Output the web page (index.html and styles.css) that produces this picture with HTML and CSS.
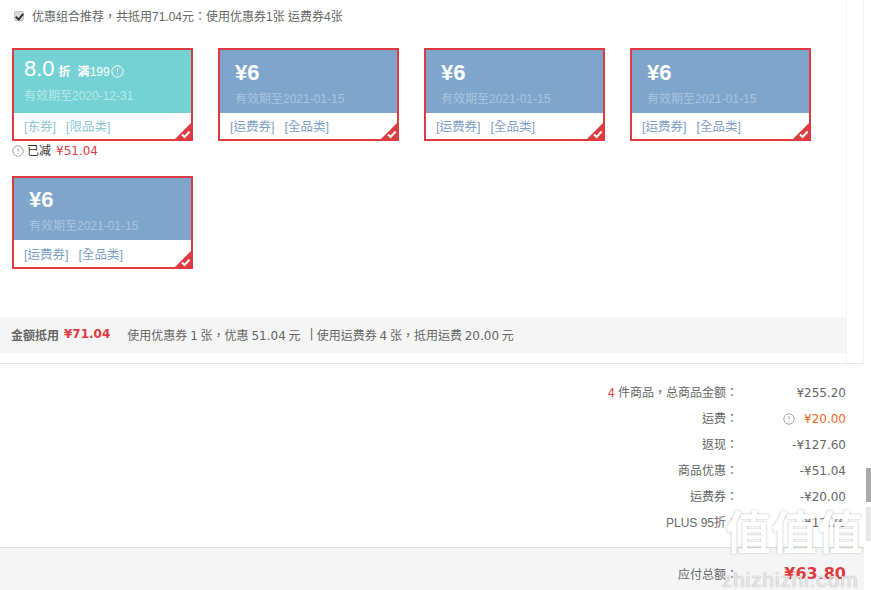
FILE: index.html
```html
<!DOCTYPE html>
<html lang="zh-Hant">
<head>
<meta charset="utf-8">
<title>优惠券</title>
<link rel="stylesheet" href="styles.css">
</head>
<body>
<div class="page">
  <section class="panel">
    <div class="inner">
      <label class="combo"><input type="checkbox" checked class="check"><span>优惠组合推荐，共抵用71.04元：使用优惠券1张 运费券4张</span></label>
      <div class="coupons">
        <div class="cell">
          <div class="coupon">
            <div class="face teal">
              <div class="discount"><span class="big">8.0</span><b class="zhe">折</b><span class="limit"><b>满</b>199</span><svg class="info-w" viewBox="0 0 12 12"><circle cx="6" cy="6" r="5.2" fill="none" stroke="#fff" stroke-width=".9"/><path d="M6 3v3.5M6 8v1" stroke="#fff" stroke-width=".9"/></svg></div>
              <div class="date tealdate">有效期至2020-12-31</div>
            </div>
            <div class="tags tealtags"><span>[东券]</span><span>[限品类]</span></div>
            <svg class="corner" viewBox="0 0 20 20"><path d="M20 0V20H0Z" fill="#dd3b40"/><path d="M9 13.5l2.6 2.5 5-5.5" fill="none" stroke="#fff" stroke-width="2"/></svg>
          </div>
          <div class="saved"><svg class="info" viewBox="0 0 12 12"><circle cx="6" cy="6" r="5.2" fill="none" stroke="#999" stroke-width=".9"/><path d="M6 3v3.5M6 8v1" stroke="#999" stroke-width=".9"/></svg><span>已减</span><span class="red">¥51.04</span></div>
        </div>
        <div class="cell">
          <div class="coupon">
            <div class="face blue"><div class="yen">¥6</div><div class="date">有效期至2021-01-15</div></div>
            <div class="tags"><span>[运费券]</span><span>[全品类]</span></div>
            <svg class="corner" viewBox="0 0 20 20"><path d="M20 0V20H0Z" fill="#dd3b40"/><path d="M9 13.5l2.6 2.5 5-5.5" fill="none" stroke="#fff" stroke-width="2"/></svg>
          </div>
        </div>
        <div class="cell">
          <div class="coupon">
            <div class="face blue"><div class="yen">¥6</div><div class="date">有效期至2021-01-15</div></div>
            <div class="tags"><span>[运费券]</span><span>[全品类]</span></div>
            <svg class="corner" viewBox="0 0 20 20"><path d="M20 0V20H0Z" fill="#dd3b40"/><path d="M9 13.5l2.6 2.5 5-5.5" fill="none" stroke="#fff" stroke-width="2"/></svg>
          </div>
        </div>
        <div class="cell">
          <div class="coupon">
            <div class="face blue"><div class="yen">¥6</div><div class="date">有效期至2021-01-15</div></div>
            <div class="tags"><span>[运费券]</span><span>[全品类]</span></div>
            <svg class="corner" viewBox="0 0 20 20"><path d="M20 0V20H0Z" fill="#dd3b40"/><path d="M9 13.5l2.6 2.5 5-5.5" fill="none" stroke="#fff" stroke-width="2"/></svg>
          </div>
        </div>
        <div class="cell">
          <div class="coupon">
            <div class="face blue"><div class="yen">¥6</div><div class="date">有效期至2021-01-15</div></div>
            <div class="tags"><span>[运费券]</span><span>[全品类]</span></div>
            <svg class="corner" viewBox="0 0 20 20"><path d="M20 0V20H0Z" fill="#dd3b40"/><path d="M9 13.5l2.6 2.5 5-5.5" fill="none" stroke="#fff" stroke-width="2"/></svg>
          </div>
        </div>
      </div>
      <div class="deduct"><b class="deduct-label">金额抵用</b><b class="deduct-amt">¥71.04</b><span class="deduct-desc">使用优惠券 1 张，优惠 51.04 元</span><span class="deduct-sep">|</span><span>使用运费券 4 张，抵用运费 20.00 元</span></div>
    </div>
  </section>
  <section class="summary">
    <div class="row"><div class="lbl"><em class="count">4</em> 件商品，总商品金额：</div><div class="val">¥255.20</div></div>
    <div class="row"><div class="lbl">运费：</div><div class="val orange"><svg class="info ship" viewBox="0 0 12 12"><circle cx="6" cy="6" r="5.2" fill="none" stroke="#999" stroke-width=".9"/><path d="M6 3v3.5M6 8v1" stroke="#999" stroke-width=".9"/></svg>¥20.00</div></div>
    <div class="row"><div class="lbl">返现：</div><div class="val">-¥127.60</div></div>
    <div class="row"><div class="lbl">商品优惠：</div><div class="val">-¥51.04</div></div>
    <div class="row"><div class="lbl">运费券：</div><div class="val">-¥20.00</div></div>
    <div class="row"><div class="lbl">PLUS 95折：</div><div class="val">-¥12.76</div></div>
  </section>
  <section class="total">
    <div class="total-row"><div class="lbl">应付总额：</div><div class="val total-val">¥63.80</div></div>
  </section>
  <div class="thumb thumb-dark"></div>
  <div class="thumb thumb-light"></div>
  <div class="mark"><div class="mark-glyphs"><span>值</span><span>值</span><span>值</span></div><div class="mark-url">zhizhizhi.com</div></div>
</div>
</body>
</html>
```
FILE: styles.css
```css
* { box-sizing: border-box; }
html, body { margin: 0; padding: 0; background: #fff; }
.page {
  position: relative;
  width: 871px;
  height: 590px;
  overflow: hidden;
  font-family: "Liberation Sans", "Noto Sans CJK TC", sans-serif;
  font-size: 12px;
  color: #666;
}
.panel {
  width: 864px;
  height: 364px;
  border-right: 1px solid #f0f0f0;
  border-bottom: 1px solid #e6e6e6;
  padding-right: 16px;
}
.inner {
  height: 363px;
  border-right: 1px solid #f3f3f3;
  display: flex;
  flex-direction: column;
}
.combo {
  display: flex;
  align-items: center;
  height: 16px;
  margin-top: 8px;
  padding-left: 14px;
  gap: 8px;
  color: #666;
  line-height: 18px;
}
.combo span { padding-top: 1px; }
.check {
  appearance: none;
  position: relative;
  width: 10px;
  height: 10px;
  margin: 0;
  border-radius: 2px;
  background: #dcdcdc;
  border: 1px solid #c4c4c4;
}
.check::after {
  content: "";
  position: absolute;
  left: 2px;
  top: 0;
  width: 3px;
  height: 6px;
  border: solid #333;
  border-width: 0 2px 2px 0;
  transform: rotate(40deg);
}
.coupons {
  display: flex;
  flex-wrap: wrap;
  margin-top: 24px;
  padding-left: 12px;
  column-gap: 25px;
  height: 269px;
  align-content: flex-start;
}
.cell { width: 181px; height: 128px; }
.coupon {
  position: relative;
  height: 93px;
  border: 2px solid #dd3b40;
  background: #fff;
}
.face { height: 63px; color: #fff; padding-top: 9px; }
.blue { background: #7ea6cd; padding-left: 15px; }
.teal { background: #74d2d4; padding-left: 10px; padding-top: 5px; }
.yen { font-size: 22px; line-height: 28px; font-weight: 700; height: 31px; }
.date { font-size: 12px; line-height: 16px; color: #a9c3de; margin-top: 1px; }
.tealdate { color: #b4e8e9; margin-top: 3px; }
.discount { display: flex; align-items: baseline; height: 30px; }
.big { font-size: 22px; line-height: 28px; }
.zhe { font-size: 12px; margin-left: 4px; }
.limit { font-size: 12px; margin-left: 7px; }
.info-w { width: 13px; height: 13px; align-self: center; margin: 2px 0 0 1px; }
.tags { display: flex; gap: 10px; padding-left: 10px; font-size: 12.5px; line-height: 28px; color: #7ea0c6; }
.tealtags { color: #8fc4d4; }
.corner { position: absolute; right: -2px; bottom: -2px; width: 20px; height: 20px; }
.cell:nth-child(5) .face { height: 62px; padding-top: 8px; }
.cell:nth-child(5) .tags { line-height: 30px; }
.saved { display: flex; align-items: center; gap: 3px; height: 18px; margin-top: 1px; color: #333; line-height: 18px; }
.saved .red { color: #dd3b40; margin-left: 2px; font-family: "DejaVu Sans", "Noto Sans CJK TC", sans-serif; }
.info { width: 12px; height: 12px; flex: none; }
.deduct {
  display: flex;
  align-items: center;
  height: 36px;
  background: #f5f5f5;
  padding: 0 0 2px 11px;
  color: #666;
  word-spacing: -1px;
  font-family: "DejaVu Sans", "Noto Sans CJK TC", sans-serif;
}
.deduct-label { color: #666; }
.deduct-amt { color: #dd3b40; margin-left: 5px; }
.deduct-desc { margin-left: 17px; }
.deduct-sep { margin: 0 3px 0 9px; }
.summary { padding-top: 16px; height: 183px; }
.row { display: flex; height: 26px; line-height: 26px; }
.lbl { width: 738px; text-align: right; }
.count { color: #dd3b40; font-style: normal; }
.val { width: 108px; text-align: right; font-family: "DejaVu Sans", "Noto Sans CJK TC", sans-serif; }
.orange { color: #f2671f; }
.ship { vertical-align: -2px; margin-right: 9px; }
.total {
  width: 864px;
  height: 43px;
  background: #f5f5f5;
  border-top: 1px solid #ddd;
  padding-top: 13px;
}
.total-row { display: flex; align-items: center; height: 24px; }
.total-val { color: #dd3b40; font-size: 16px; font-weight: 700; }
.thumb { position: absolute; left: 866px; width: 5px; height: 34px; }
.thumb-dark { top: 468px; background: #a9a9a9; }
.thumb-light { top: 507px; background: #e6e6e6; }
.mark { position: absolute; left: 725px; top: 505px; width: 140px; color: #fff; text-shadow: 0 0 2px #aaa; }
.mark-glyphs { display: flex; font-size: 46px; font-weight: 700; line-height: 56px; }
.mark-glyphs span { width: 46px; text-align: center; }
.mark-url { position: absolute; left: -3px; top: 63px; font-size: 21px; line-height: 24px; letter-spacing: .8px; white-space: nowrap; color: rgba(255,255,255,.8); text-shadow: 0 0 1px #888; }
```
